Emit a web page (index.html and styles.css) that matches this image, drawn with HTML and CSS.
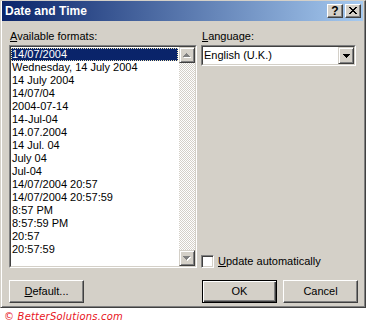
FILE: index.html
```html
<!DOCTYPE html>
<html>
<head>
<meta charset="utf-8">
<link rel="stylesheet" href="styles.css">
</head>
<body>
<div class="dialog">
  <div class="titlebar">
    <span class="title">Date and Time</span>
    <div class="caption-btns">
      <div class="cap-btn help">?</div>
      <div class="cap-btn close">
        <svg width="8" height="7" viewBox="0 0 8 7"><path fill="#000" d="M0 0h2v1H0z M6 0h2v1H6z M1 1h2v1H1z M5 1h2v1H5z M2 2h4v1H2z M3 3h2v1H3z M2 4h4v1H2z M1 5h2v1H1z M5 5h2v1H5z M0 6h2v1H0z M6 6h2v1H6z"/></svg>
      </div>
    </div>
  </div>
  <div class="content">
    <div class="col col-left">
      <div class="label"><u>A</u>vailable formats:</div>
      <div class="sunken listbox">
        <div class="sunken-inner listbox-inner">
          <ul class="items">
            <li class="item selected"><span class="focus">14/07/2004</span></li>
            <li class="item">Wednesday, 14 July 2004</li>
            <li class="item">14 July 2004</li>
            <li class="item">14/07/04</li>
            <li class="item">2004-07-14</li>
            <li class="item">14-Jul-04</li>
            <li class="item">14.07.2004</li>
            <li class="item">14 Jul. 04</li>
            <li class="item">July 04</li>
            <li class="item">Jul-04</li>
            <li class="item">14/07/2004 20:57</li>
            <li class="item">14/07/2004 20:57:59</li>
            <li class="item">8:57 PM</li>
            <li class="item">8:57:59 PM</li>
            <li class="item">20:57</li>
            <li class="item">20:57:59</li>
          </ul>
          <div class="scrollbar">
            <div class="raised sb-btn">
              <svg width="8" height="5" viewBox="0 0 8 5"><path fill="#fff" d="M4 1h1v1H4z M3 2h3v1H3z M2 3h5v1H2z M1 4h7v1H1z"/><path fill="#808080" d="M3 0h1v1H3z M2 1h3v1H2z M1 2h5v1H1z M0 3h7v1H0z"/></svg>
            </div>
            <div class="sb-track"></div>
            <div class="raised sb-btn">
              <svg width="8" height="5" viewBox="0 0 8 5"><path fill="#fff" d="M1 1h7v1H1z M2 2h5v1H2z M3 3h3v1H3z M4 4h1v1H4z"/><path fill="#808080" d="M0 0h7v1H0z M1 1h5v1H1z M2 2h3v1H2z M3 3h1v1H3z"/></svg>
            </div>
          </div>
        </div>
      </div>
    </div>
    <div class="col col-right">
      <div class="label"><u>L</u>anguage:</div>
      <div class="sunken combo">
        <div class="sunken-inner combo-inner">
          <span class="combo-text">English (U.K.)</span>
          <div class="raised combo-btn">
            <svg width="7" height="4" viewBox="0 0 7 4"><path fill="#000" d="M0 0h7v1H0z M1 1h5v1H1z M2 2h3v1H2z M3 3h1v1H3z"/></svg>
          </div>
        </div>
      </div>
      <div class="check">
        <span class="checkbox"></span>
        <span class="check-label"><u>U</u>pdate automatically</span>
      </div>
    </div>
  </div>
  <div class="footer">
    <div class="btn"><span><u>D</u>efault...</span></div>
    <div class="footer-spacer"></div>
    <div class="btn btn-default"><span>OK</span></div>
    <div class="btn"><span>Cancel</span></div>
  </div>
</div>
<div class="copyright">© BetterSolutions.com</div>
</body>
</html>
```

FILE: styles.css
```css
html, body {
  margin: 0;
  padding: 0;
}

body {
  width: 366px;
  height: 324px;
  overflow: hidden;
  background: #ffffff;
  font-family: "Liberation Sans", Arial, sans-serif;
  font-size: 11px;
  color: #000;
}

.dialog {
  width: 366px;
  height: 308px;
  box-sizing: border-box;
  background: #d4d0c8;
  border-style: solid;
  border-width: 1px;
  border-color: #d4d0c8 #404040 #404040 #d4d0c8;
  box-shadow: inset 1px 0 #ffffff, inset -1px -1px #808080;
  padding: 0 2px 2px 1px;
  display: flex;
  flex-direction: column;
}

.titlebar {
  height: 20px;
  display: flex;
  align-items: center;
  justify-content: space-between;
  background: linear-gradient(90deg, #0a246a 0%, #a6caf0 100%);
  padding: 0 2px 0 3px;
}

.title {
  color: #ffffff;
  font-weight: bold;
  font-size: 12px;
  line-height: 14px;
}

.caption-btns {
  display: flex;
  gap: 2px;
}

.cap-btn {
  width: 16px;
  height: 14px;
  box-sizing: border-box;
  background: #d4d0c8;
  border: 1px solid;
  border-color: #ffffff #404040 #404040 #ffffff;
  box-shadow: inset -1px -1px #808080;
  display: flex;
  align-items: center;
  justify-content: center;
}

.cap-btn.help {
  font-weight: bold;
  font-size: 12px;
  line-height: 12px;
  padding-bottom: 1px;
}

.cap-btn.close svg {
  display: block;
  margin: 0 0 1px 0;
}

.content {
  display: flex;
  gap: 4px;
  padding: 9px 7px 0 7px;
}

.col {
  display: flex;
  flex-direction: column;
}

.col-left {
  width: 188px;
}

.col-right {
  flex: 1;
}

.label {
  height: 13px;
  line-height: 13px;
  margin-bottom: 2px;
  padding-left: 1px;
}

.sunken {
  box-sizing: border-box;
  border: 1px solid;
  border-color: #808080 #ffffff #ffffff #808080;
}

.sunken-inner {
  box-sizing: border-box;
  border: 1px solid;
  border-color: #404040 #d4d0c8 #d4d0c8 #404040;
  background: #ffffff;
  height: 100%;
}

.raised {
  box-sizing: border-box;
  background: #d4d0c8;
  border: 1px solid;
  border-color: #d4d0c8 #404040 #404040 #d4d0c8;
  box-shadow: inset 1px 1px #ffffff, inset -1px -1px #808080;
  display: flex;
  align-items: center;
  justify-content: center;
}

.listbox {
  height: 223px;
}

.listbox-inner {
  display: flex;
}

.items {
  list-style: none;
  margin: 0;
  padding: 1px 1px 0 0;
  flex: 1;
}

.item {
  height: 13px;
  line-height: 13px;
  padding-left: 1px;
  white-space: nowrap;
}

.item.selected {
  background: #0a246a;
  color: #ffffff;
  padding-left: 0;
  outline: 1px dotted #f0e6b4;
  outline-offset: -1px;
}

.item.selected .focus {
  padding-left: 1px;
}

.scrollbar {
  width: 16px;
  display: flex;
  flex-direction: column;
}

.sb-btn {
  width: 16px;
  height: 16px;
}

.sb-track {
  flex: 1;
  background-image: repeating-conic-gradient(#ffffff 0 25%, #d4d0c8 0 50%);
  background-size: 2px 2px;
}

.combo {
  height: 21px;
}

.combo-inner {
  display: flex;
  align-items: center;
}

.combo-text {
  flex: 1;
  padding-left: 1px;
  line-height: 13px;
}

.combo-btn {
  width: 16px;
  height: 17px;
}

.check {
  margin-top: auto;
  display: flex;
  align-items: center;
  gap: 4px;
  height: 13px;
}

.checkbox {
  width: 13px;
  height: 13px;
  box-sizing: border-box;
  background: #ffffff;
  border: 1px solid;
  border-color: #808080 #ffffff #ffffff #808080;
  box-shadow: inset 1px 1px #404040, inset -1px -1px #d4d0c8;
}

.check-label {
  line-height: 13px;
}

.footer {
  display: flex;
  gap: 6px;
  padding: 12px 5px 0 7px;
}

.footer-spacer {
  flex: 1;
}

.btn {
  width: 75px;
  height: 23px;
  box-sizing: border-box;
  background: #d4d0c8;
  border: 1px solid;
  border-color: #ffffff #404040 #404040 #ffffff;
  box-shadow: inset -1px -1px #808080;
  display: flex;
  align-items: center;
  justify-content: center;
  line-height: 13px;
}

.btn-default {
  border-color: #000000;
  box-shadow: inset 1px 1px #ffffff, inset -1px -1px #404040, inset -2px -2px #808080;
}

.copyright {
  padding: 2px 0 0 4px;
  font-family: "DejaVu Sans", sans-serif;
  font-style: italic;
  font-size: 10px;
  line-height: 13px;
  color: #e8141c;
  letter-spacing: 0.2px;
}
```
